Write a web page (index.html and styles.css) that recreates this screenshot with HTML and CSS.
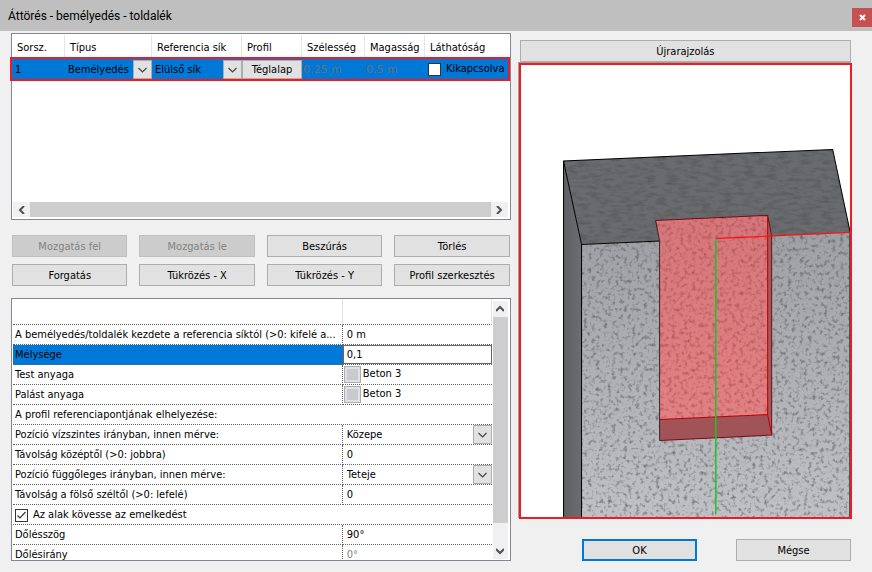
FILE: index.html
```
<!DOCTYPE html>
<html lang="hu">
<head>
    <meta charset="UTF-8">
    <meta name="viewport" content="width=device-width, initial-scale=1.0">
    <title>Áttörés - bemélyedés - toldalék</title>
    <link rel="stylesheet" href="styles.css">
</head>
<body>
    <header class="titlebar">
        <h1>Áttörés - bemélyedés - toldalék</h1>
        <button class="close" aria-label="Bezárás">
            <svg width="7" height="7" viewBox="0 0 7 7"><path d="M1 1l5 5M6 1L1 6" stroke="#fff" stroke-width="2"/></svg>
        </button>
    </header>

    <main class="dialog">
        <section class="left">
            <div class="list">
                <table class="items">
                    <colgroup>
                        <col class="c-num"><col class="c-type"><col class="c-ref"><col class="c-profile"><col class="c-width"><col class="c-height"><col>
                    </colgroup>
                    <thead>
                        <tr>
                            <th>Sorsz.</th>
                            <th>Típus</th>
                            <th>Referencia sík</th>
                            <th>Profil</th>
                            <th>Szélesség</th>
                            <th>Magasság</th>
                            <th>Láthatóság</th>
                        </tr>
                    </thead>
                    <tbody>
                        <tr class="selected">
                            <td>1</td>
                            <td><select class="combo" aria-label="Típus"><option>Bemélyedés</option></select></td>
                            <td><select class="combo" aria-label="Referencia sík"><option>Elülső sík</option></select></td>
                            <td><button class="btn cell-btn">Téglalap</button></td>
                            <td><input class="dim" type="text" value="0.25 m" aria-label="Szélesség" disabled></td>
                            <td><input class="dim" type="text" value="0.5 m" aria-label="Magasság" disabled></td>
                            <td><label class="check"><input type="checkbox">Kikapcsolva</label></td>
                        </tr>
                    </tbody>
                </table>
                <div class="hscroll">
                    <button class="arrow" aria-label="Balra"><svg width="8" height="8" viewBox="0 0 8 8"><path d="M6 0L2 4l4 4"/></svg></button>
                    <div class="thumb"></div>
                    <button class="arrow" aria-label="Jobbra"><svg width="8" height="8" viewBox="0 0 8 8"><path d="M2 0l4 4-4 4"/></svg></button>
                </div>
            </div>

            <div class="actions">
                <button class="btn" disabled>Mozgatás fel</button>
                <button class="btn" disabled>Mozgatás le</button>
                <button class="btn">Beszúrás</button>
                <button class="btn">Törlés</button>
                <button class="btn">Forgatás</button>
                <button class="btn">Tükrözés - X</button>
                <button class="btn">Tükrözés - Y</button>
                <button class="btn">Profil szerkesztés</button>
            </div>

            <div class="props">
                <div class="props-view">
                    <table class="prop-table">
                        <colgroup><col><col class="c-value"></colgroup>
                        <thead>
                            <tr><td></td><td></td></tr>
                        </thead>
                        <tbody>
                            <tr>
                                <td><label for="start">A bemélyedés/toldalék kezdete a referencia síktól (&gt;0: kifelé a...</label></td>
                                <td><input type="text" id="start" value="0 m"></td>
                            </tr>
                            <tr class="active">
                                <td><label for="depth">Mélysége</label></td>
                                <td><input type="text" id="depth" value="0,1"></td>
                            </tr>
                            <tr>
                                <td>Test anyaga</td>
                                <td><div class="material"><button class="swatch" aria-label="Test anyaga"></button>Beton 3</div></td>
                            </tr>
                            <tr>
                                <td>Palást anyaga</td>
                                <td><div class="material"><button class="swatch" aria-label="Palást anyaga"></button>Beton 3</div></td>
                            </tr>
                            <tr>
                                <td colspan="2">A profil referenciapontjának elhelyezése:</td>
                            </tr>
                            <tr>
                                <td><label for="posX">Pozíció vízszintes irányban, innen mérve:</label></td>
                                <td><select class="combo" id="posX"><option>Közepe</option></select></td>
                            </tr>
                            <tr>
                                <td><label for="distX">Távolság középtől (&gt;0: jobbra)</label></td>
                                <td><input type="text" id="distX" value="0"></td>
                            </tr>
                            <tr>
                                <td><label for="posY">Pozíció függőleges irányban, innen mérve:</label></td>
                                <td><select class="combo" id="posY"><option>Teteje</option></select></td>
                            </tr>
                            <tr>
                                <td><label for="distY">Távolság a fölső széltől (&gt;0: lefelé)</label></td>
                                <td><input type="text" id="distY" value="0"></td>
                            </tr>
                            <tr>
                                <td colspan="2"><label class="check"><input type="checkbox" checked>Az alak kövesse az emelkedést</label></td>
                            </tr>
                            <tr>
                                <td><label for="angle">Dőlésszög</label></td>
                                <td><input type="text" id="angle" value="90°"></td>
                            </tr>
                            <tr>
                                <td><label for="direction">Dőlésirány</label></td>
                                <td><input type="text" id="direction" value="0°" disabled></td>
                            </tr>
                        </tbody>
                    </table>
                </div>
                <div class="vscroll">
                    <button class="arrow" aria-label="Fel"><svg width="8" height="8" viewBox="0 0 8 8"><path d="M0 6l4-4 4 4"/></svg></button>
                    <div class="thumb"></div>
                    <button class="arrow" aria-label="Le"><svg width="8" height="8" viewBox="0 0 8 8"><path d="M0 2l4 4 4-4"/></svg></button>
                </div>
            </div>
        </section>

        <section class="right">
            <button class="btn redraw">Újrarajzolás</button>
            <div class="preview">
                <svg class="scene" viewBox="521 65 329 452" preserveAspectRatio="xMidYMid slice">
                    <defs>
                        <linearGradient id="front" x1="0" y1="0" x2="0" y2="1">
                            <stop offset="0" stop-color="#9fa0a6"/>
                            <stop offset="1" stop-color="#c0c1c6"/>
                        </linearGradient>
                        <linearGradient id="side" x1="0" y1="0" x2="1" y2="0">
                            <stop offset="0" stop-color="#5f6063"/>
                            <stop offset="1" stop-color="#6c6d70"/>
                        </linearGradient>
                        <linearGradient id="pocket" x1="0" y1="0" x2="0" y2="1">
                            <stop offset="0" stop-color="#d5777a"/>
                            <stop offset="1" stop-color="#e28184"/>
                        </linearGradient>
                        <!-- concrete grain -->
                        <filter id="grain" x="0" y="0" width="1" height="1" color-interpolation-filters="sRGB">
                            <feTurbulence type="fractalNoise" baseFrequency="0.25" numOctaves="4" seed="4" result="n"/>
                            <feColorMatrix in="n" values="0 0 0 0 0.3  0 0 0 0 0.3  0 0 0 0 0.3  0 0 0 1.7 -0.85"/>
                            <feComposite in2="SourceAlpha" operator="in" result="spots"/>
                            <feMerge><feMergeNode in="SourceGraphic"/><feMergeNode in="spots"/></feMerge>
                        </filter>
                        <filter id="grainTop" x="0" y="0" width="1" height="1" color-interpolation-filters="sRGB">
                            <feTurbulence type="fractalNoise" baseFrequency="0.09 0.28" numOctaves="3" seed="9" result="n"/>
                            <feColorMatrix in="n" values="0 0 0 0 0.2  0 0 0 0 0.2  0 0 0 0 0.2  0 0 0 0.7 -0.3"/>
                            <feComposite in2="SourceAlpha" operator="in" result="spots"/>
                            <feMerge><feMergeNode in="SourceGraphic"/><feMergeNode in="spots"/></feMerge>
                        </filter>
                        <filter id="grainRed" x="0" y="0" width="1" height="1" color-interpolation-filters="sRGB">
                            <feTurbulence type="fractalNoise" baseFrequency="0.25" numOctaves="4" seed="7" result="n"/>
                            <feColorMatrix in="n" values="0 0 0 0 0.5  0 0 0 0 0.15  0 0 0 0 0.18  0 0 0 1.1 -0.53"/>
                            <feComposite in2="SourceAlpha" operator="in" result="spots"/>
                            <feMerge><feMergeNode in="SourceGraphic"/><feMergeNode in="spots"/></feMerge>
                        </filter>
                    </defs>
                    <path d="M563.500 161l18 83.500V517h-18z" fill="url(#side)"/>
                    <path d="M563.500 161L832.500 149.500 850 232.500 581.500 244.500z" fill="#6a6b6e" filter="url(#grainTop)"/>
                    <path d="M581.500 244.500L850 232.500V517H581.500z" fill="url(#front)" filter="url(#grain)"/>
                    <path d="M563.500 517V161L832.500 149.500 850 232.500M563.500 161L581.500 244.500V517M581.500 244.500L660 241" fill="none" stroke="#000"/>
                    <path d="M849.500 233V517" stroke="#3c3f44"/>
                    <!-- recess -->
                    <path d="M655.500 220.500L767.500 215.500V414.500L659.500 419.500V241z" fill="url(#pocket)" filter="url(#grainRed)"/>
                    <path d="M767.500 215.500L771.500 236V435L767.500 414.500z" fill="#a2575b"/>
                    <path d="M659.500 419.500L767.500 414.500 771.500 435 659.500 440.500z" fill="#a05457"/>
                    <path d="M655.500 220.500L767.500 215.500 771.500 236V435L659.500 440.500" fill="none" stroke="#7d0a10"/>
                    <path d="M767.500 215.500V414.500L771.500 435M767.500 414.500L659.500 419.500" fill="none" stroke="#b80008"/>
                    <path d="M655.500 220.500L659.500 241V440.500" fill="none" stroke="#3b2326"/>
                    <!-- axes -->
                    <path d="M716 238.500L850 232.500" stroke="#ff1010" stroke-width="1.200"/>
                    <path d="M715.700 238.500V514" stroke="#14c82c" stroke-width="1.500"/>
                </svg>
            </div>
            <div class="footer">
                <button class="btn default">OK</button>
                <button class="btn">Mégse</button>
            </div>
        </section>
    </main>
</body>
</html>
```
FILE: styles.css
```
* {
    box-sizing: border-box;
}
body {
    margin: 0;
    height: 100vh;
    display: flex;
    flex-direction: column;
    background: #f0f0f0;
    color: #000;
    font-family: Tahoma, "DejaVu Sans Condensed", sans-serif;
    font-size: 11px;
    line-height: 14px;
    overflow: hidden;
}
button, input, select {
    font: inherit;
    color: inherit;
    margin: 0;
    padding: 0;
}

/* title bar */
.titlebar {
    flex: none;
    height: 31px;
    display: flex;
    align-items: center;
    justify-content: space-between;
    padding-left: 8px;
    background: #bfbfbf;
}
.titlebar h1 {
    margin: 0;
    font-family: "Segoe UI", Roboto, sans-serif;
    font-size: 12px;
    font-weight: normal;
}
.close {
    width: 20px;
    height: 19px;
    margin-top: 4px;
    border: none;
    background: #c75050;
    display: flex;
    align-items: center;
    justify-content: center;
}

.dialog {
    flex: 1;
    min-height: 0;
    display: grid;
    grid-template-columns: minmax(0, 3fr) minmax(0, 2fr);
    gap: 8px;
    padding: 2px 20px 11px 11px;
}
.left {
    min-height: 0;
    display: flex;
    flex-direction: column;
}

.btn {
    height: 22px;
    padding-top: 2px;
    border: 1px solid #adadad;
    background: #e1e1e1;
    text-align: center;
    white-space: nowrap;
}
.btn:disabled {
    border-color: #bfbfbf;
    background: #ccc;
    color: #838383;
}
.btn.default {
    border: 2px solid #0078d7;
}

/* item list */
.list {
    flex: 185 1 0;
    min-height: 0;
    display: flex;
    flex-direction: column;
    justify-content: space-between;
    padding: 1px 2px 1px 0;
    border: 1px solid #828790;
    background: #fff;
}
table {
    width: 100%;
    table-layout: fixed;
    border-collapse: separate;
    border-spacing: 0;
}
.c-num { width: 53px; }
.c-type { width: 87px; }
.c-ref { width: 90px; }
.c-profile { width: 60px; }
.c-width { width: 63px; }
.c-height { width: 60px; }
.items th {
    height: 24px;
    padding: 2px 0 0 5px;
    border-right: 1px solid #e5e5e5;
    font-weight: normal;
    text-align: left;
    white-space: nowrap;
}
.items th:last-child {
    border-right: none;
}
.items td {
    height: 20px;
    padding: 0 0 0 3px;
    white-space: nowrap;
}
.items td:first-child {
    padding-top: 2px;
}
.items td:nth-child(4) {
    padding: 0;
}
.items td:nth-child(5), .items td:nth-child(6) {
    padding-left: 1px;
}
.selected {
    background: #0078d7;
    outline: 2px solid #ed1c24;
}
.combo {
    display: block;
    width: 100%;
    height: 19px;
    padding-top: 1px;
    border: none;
    border-radius: 0;
    appearance: none;
    background: transparent url("data:image/svg+xml,%3Csvg xmlns='http://www.w3.org/2000/svg' width='19' height='19'%3E%3Cpath d='M.5.5h18v18H.5z' fill='%23e1e1e1' stroke='%23adadad'/%3E%3Cpath d='M5.500 8l4 4 4-4' fill='none' stroke='%23444' stroke-width='1.200'/%3E%3C/svg%3E") no-repeat right center;
}
.cell-btn {
    display: block;
    width: 100%;
    height: 19px;
    padding-top: 1px;
}
.dim {
    display: block;
    width: 100%;
    padding-top: 1px;
    border: none;
    background: none;
    font-family: Verdana, "DejaVu Sans", sans-serif;
    color: #6b6e74;
}
.check {
    display: flex;
    align-items: center;
    gap: 5px;
}
.check input {
    appearance: none;
    width: 13px;
    height: 13px;
    border: 1px solid #333;
    background: #fff;
}
.check input:checked {
    background: #fff url("data:image/svg+xml,%3Csvg xmlns='http://www.w3.org/2000/svg' width='11' height='11'%3E%3Cpath d='M1.500 5.500l2.500 2.500 5.500-6' fill='none' stroke='%23333' stroke-width='1.200'/%3E%3C/svg%3E") no-repeat center;
}

/* scroll bars */
.hscroll, .vscroll {
    display: flex;
    background: #f0f0f0;
}
.hscroll {
    height: 15px;
    margin: 0 0 1px 1px;
}
.vscroll {
    flex: none;
    width: 15px;
    margin: 2px 2px 1px 1px;
    flex-direction: column;
}
.arrow {
    flex: none;
    width: 17px;
    height: 16px;
    border: none;
    background: none;
    display: flex;
    align-items: center;
    justify-content: center;
}
.vscroll .arrow {
    width: 15px;
}
.arrow path {
    fill: none;
    stroke: #505050;
    stroke-width: 2;
}
.thumb {
    flex: 1;
    background: #cdcdcd;
}
.vscroll .thumb {
    margin-bottom: 20px;
}

.actions {
    flex: none;
    display: grid;
    grid-template-columns: repeat(4, 1fr);
    gap: 7px 12px;
    padding: 15px 1px 12px;
}

/* property sheet */
.props {
    flex: 265 1 0;
    min-height: 0;
    display: flex;
    border: 1px solid #828790;
    background: #fff;
}
.props-view {
    flex: 1;
    min-width: 0;
    overflow: hidden;
    padding-left: 1px;
}
.c-value {
    width: 149px;
}
.prop-table td {
    height: 20px;
    padding: 2px 0 0 2px;
    border-bottom: 1px dotted #666;
    white-space: nowrap;
    overflow: hidden;
}
.prop-table tbody td:first-child:not([colspan]) {
    border-right: 1px dotted #666;
}
.prop-table thead td {
    height: 26px;
    border-right: 1px solid #e5e5e5;
}
.prop-table td + td {
    padding: 0;
}
.prop-table input[type="text"] {
    display: block;
    width: 100%;
    height: 19px;
    padding: 0 0 0 3px;
    border: 1px solid transparent;
    background: none;
}
.prop-table input:disabled {
    color: #838383;
}
.prop-table .combo {
    padding-left: 4px;
}
.prop-table .active td:first-child {
    background: #0078d7;
}
.prop-table .active input[type="text"] {
    border-color: #666;
}
.material {
    display: flex;
    align-items: center;
    gap: 2px;
    padding-left: 1px;
}
.swatch {
    width: 17px;
    height: 17px;
    border: 1px solid #adadad;
    background: #c9cacf;
    box-shadow: inset 0 0 0 2px #e1e1e1;
}

/* preview */
.right {
    min-height: 0;
    display: flex;
    flex-direction: column;
    padding-top: 7px;
}
.redraw {
    margin: 0 1px;
}
.preview {
    flex: 1;
    min-height: 0;
    margin-top: 1px;
    border: 2px solid #ed1c24;
    background: #fff;
    box-shadow: -1px -1px 0 #a0a0a0;
}
.scene {
    display: block;
    width: 100%;
    height: 100%;
}
.footer {
    flex: none;
    display: flex;
    justify-content: flex-end;
    gap: 39px;
    padding: 20px 1px 0 0;
}
.footer .btn {
    width: 115px;
}
```
